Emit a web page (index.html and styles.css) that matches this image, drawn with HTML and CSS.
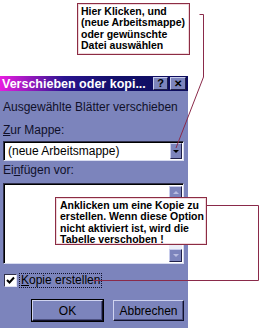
FILE: index.html
```html
<!DOCTYPE html>
<html lang="de">
<head>
    <meta charset="UTF-8">
    <title>Verschieben oder kopieren</title>
    <link rel="stylesheet" href="styles.css">
</head>
<body>
    <div class="page">
        <div class="top">
            <div class="note note-top">
                Hier Klicken, und<br>
                (neue Arbeitsmappe)<br>
                oder gewünschte<br>
                Datei auswählen
            </div>
        </div>

        <div class="dialog">
            <div class="titlebar">
                <span class="title">Verschieben oder kopi...</span>
                <span class="tbtn">?</span>
                <span class="tbtn close">✕</span>
            </div>
            <div class="content">
                <div class="label first">Ausgewählte Blätter verschieben</div>
                <div class="label"><u>Z</u>ur Mappe:</div>
                <div class="combo">
                    <span>(neue Arbeitsmappe)</span>
                    <span class="arrow-btn"><i class="tri down"></i></span>
                </div>
                <div class="label"><span>Ei<u>n</u>fügen vor:</span></div>
                <div class="listbox">
                    <div class="list-items"></div>
                    <div class="scroll">
                        <span class="arrow-btn small"><i class="tri up off"></i></span>
                        <span class="track"></span>
                        <span class="arrow-btn small"><i class="tri down off"></i></span>
                    </div>
                </div>
                <div class="check-row">
                    <span class="checkbox">
                        <svg width="9" height="9" viewBox="0 0 9 9"><path d="M1 4 L3.5 6.5 L8 1.5" fill="none" stroke="#000" stroke-width="2"/></svg>
                    </span>
                    <span class="check-label"><u>K</u>opie erstellen</span>
                </div>
                <div class="buttons">
                    <span class="btn default">OK</span>
                    <span class="btn">Abbrechen</span>
                </div>
            </div>
        </div>

        <div class="note note-bottom">
            Anklicken um eine Kopie zu<br>
            erstellen. Wenn diese Option<br>
            nicht aktiviert ist, wird die<br>
            Tabelle verschoben !
        </div>

        <svg class="lines" width="265" height="328" viewBox="0 0 265 328">
            <polyline points="199.5,14.5 203.5,14.5 203.5,77 176,148" />
            <polyline points="207,205.5 258.5,205.5 258.5,280.5 93,280.5" />
        </svg>
    </div>
</body>
</html>
```

FILE: styles.css
```css
body {
    margin: 0;
    background-color: #fff;
    font-family: "Liberation Sans", Arial, sans-serif;
}
.page {
    position: relative;
    width: 265px;
    height: 328px;
    overflow: hidden;
}
.top {
    height: 76px;
    padding-top: 3px;
    box-sizing: border-box;
}
.note {
    background-color: #fff;
    border: 1px solid #8c2c44;
    box-shadow: inset 0 0 0 1px #f0d8dc;
    color: #000;
    font-weight: bold;
    font-size: 10.5px;
    line-height: 11.3px;
    box-sizing: border-box;
}
.note-top {
    margin-left: 77px;
    width: 113px;
    height: 52px;
    padding: 2px 0 0 3px;
}
.note-bottom {
    position: absolute;
    left: 55px;
    top: 197px;
    width: 152px;
    height: 48px;
    padding: 2px 0 0 4px;
    z-index: 2;
}
.lines {
    position: absolute;
    left: 0;
    top: 0;
    z-index: 3;
}
.lines polyline {
    fill: none;
    stroke: #8a2a4a;
    stroke-width: 1;
}

/* dialog */
.dialog {
    width: 188px;
    height: 252px;
    background-color: #7c84bc;
    color: #10102a;
}
.titlebar {
    height: 15px;
    display: flex;
    align-items: center;
    background: linear-gradient(to right, #e81ce0 0%, #8a18b8 18%, #2a1490 34%, #14106c 60%, #0c0c5c 100%);
    padding: 0 2px 0 2px;
}
.title {
    flex: 1;
    color: #fff;
    font-weight: bold;
    font-size: 12.5px;
    white-space: nowrap;
}
.tbtn {
    width: 13px;
    height: 11px;
    margin-left: 2px;
    background-color: #7c84bc;
    border-top: 1px solid #c8ccec;
    border-left: 1px solid #c8ccec;
    border-right: 1px solid #20204a;
    border-bottom: 1px solid #20204a;
    box-sizing: content-box;
    display: flex;
    align-items: center;
    justify-content: center;
    font-size: 11px;
    font-weight: bold;
    color: #000;
    line-height: 11px;
}
.close {
    width: 14px;
    font-size: 10px;
}
.content {
    padding: 9px 4px 0 3px;
}
.label {
    font-size: 12px;
    line-height: 14px;
    white-space: nowrap;
}
.label + .label {
    margin-top: 9px;
}
.combo + .label {
    margin-top: 2px;
}
.combo {
    margin-top: 4px;
    height: 20px;
    background-color: #fff;
    border-top: 1px solid #30304a;
    border-left: 1px solid #30304a;
    border-right: 1px solid #d8dcf0;
    border-bottom: 1px solid #d8dcf0;
    box-shadow: inset 1px 1px 0 #000;
    box-sizing: border-box;
    display: flex;
    align-items: center;
    justify-content: space-between;
    font-size: 12px;
    padding: 0 1px 0 4px;
    color: #000;
}
.arrow-btn {
    width: 12px;
    height: 16px;
    background-color: #7c84bc;
    border-top: 1px solid #c8ccec;
    border-left: 1px solid #c8ccec;
    border-right: 1px solid #20204a;
    border-bottom: 1px solid #20204a;
    box-sizing: border-box;
    display: flex;
    align-items: center;
    justify-content: center;
}
.arrow-btn.small {
    height: 13px;
    width: 13px;
}
.tri {
    width: 0;
    height: 0;
    border-left: 3px solid transparent;
    border-right: 3px solid transparent;
}
.tri.down {
    border-top: 3px solid #000;
}
.tri.up {
    border-bottom: 3px solid #000;
}
.tri.down.off {
    border-top-color: #b8bce0;
}
.tri.up.off {
    border-bottom-color: #b8bce0;
}
.listbox {
    margin-top: 6px;
    height: 81px;
    background-color: #fff;
    border-top: 1px solid #30304a;
    border-left: 1px solid #30304a;
    border-right: 1px solid #d8dcf0;
    border-bottom: 1px solid #d8dcf0;
    box-shadow: inset 1px 1px 0 #000;
    box-sizing: border-box;
    display: flex;
    padding: 2px 1px 1px 2px;
}
.list-items {
    flex: 1;
}
.scroll {
    display: flex;
    flex-direction: column;
    width: 13px;
}
.track {
    flex: 1;
    background-color: #eceef8;
}
.check-row {
    margin-top: 9px;
    height: 15px;
    display: flex;
    align-items: center;
    font-size: 12px;
}
.checkbox {
    width: 13px;
    height: 13px;
    background-color: #fff;
    border-top: 1px solid #30304a;
    border-left: 1px solid #30304a;
    border-right: 1px solid #e0e2f4;
    border-bottom: 1px solid #e0e2f4;
    box-sizing: border-box;
    display: flex;
    align-items: center;
    justify-content: center;
    margin-left: 1px;
}
.check-label {
    margin-left: 2px;
    padding: 0 1px;
    border: 1px dotted #10102a;
    line-height: 13px;
    color: #000;
}
.buttons {
    margin-top: 12px;
    display: flex;
    gap: 10px;
    padding-left: 29px;
}
.btn {
    width: 71px;
    height: 21px;
    box-sizing: border-box;
    background-color: #7c84bc;
    border-top: 1px solid #d0d4f0;
    border-left: 1px solid #d0d4f0;
    border-right: 1px solid #10102a;
    border-bottom: 1px solid #10102a;
    box-shadow: inset -1px -1px 0 #4c5080;
    display: flex;
    align-items: center;
    justify-content: center;
    font-size: 12px;
    color: #000;
}
.btn.default {
    outline: 1px solid #000;
}
```
